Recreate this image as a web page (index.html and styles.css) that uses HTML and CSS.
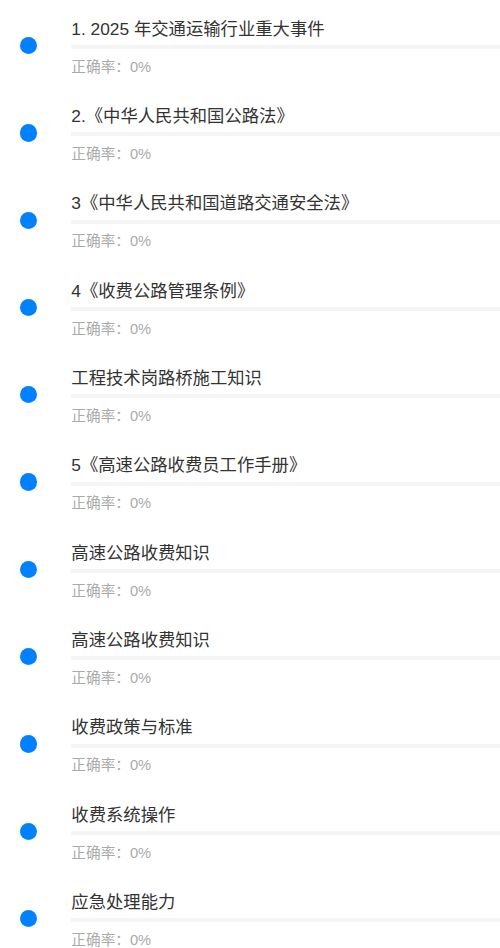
FILE: index.html
```html
<!DOCTYPE html>
<html lang="zh-CN">
<head>
    <meta charset="UTF-8">
    <meta name="viewport" content="width=device-width, initial-scale=1.0">
    <title>题库练习</title>
    <link rel="stylesheet" href="styles.css">
</head>
<body>
    <ul class="bank-list">
        <li class="bank-item">
            <span class="dot"></span>
            <div class="bank-info">
                <p class="bank-title">1. 2025 年交通运输行业重大事件</p>
                <div class="progress"><div class="progress-fill" style="width: 0%"></div></div>
                <p class="bank-rate">正确率：0%</p>
            </div>
        </li>
        <li class="bank-item">
            <span class="dot"></span>
            <div class="bank-info">
                <p class="bank-title">2.《中华人民共和国公路法》</p>
                <div class="progress"><div class="progress-fill" style="width: 0%"></div></div>
                <p class="bank-rate">正确率：0%</p>
            </div>
        </li>
        <li class="bank-item">
            <span class="dot"></span>
            <div class="bank-info">
                <p class="bank-title">3《中华人民共和国道路交通安全法》</p>
                <div class="progress"><div class="progress-fill" style="width: 0%"></div></div>
                <p class="bank-rate">正确率：0%</p>
            </div>
        </li>
        <li class="bank-item">
            <span class="dot"></span>
            <div class="bank-info">
                <p class="bank-title">4《收费公路管理条例》</p>
                <div class="progress"><div class="progress-fill" style="width: 0%"></div></div>
                <p class="bank-rate">正确率：0%</p>
            </div>
        </li>
        <li class="bank-item">
            <span class="dot"></span>
            <div class="bank-info">
                <p class="bank-title">工程技术岗路桥施工知识</p>
                <div class="progress"><div class="progress-fill" style="width: 0%"></div></div>
                <p class="bank-rate">正确率：0%</p>
            </div>
        </li>
        <li class="bank-item">
            <span class="dot"></span>
            <div class="bank-info">
                <p class="bank-title">5《高速公路收费员工作手册》</p>
                <div class="progress"><div class="progress-fill" style="width: 0%"></div></div>
                <p class="bank-rate">正确率：0%</p>
            </div>
        </li>
        <li class="bank-item">
            <span class="dot"></span>
            <div class="bank-info">
                <p class="bank-title">高速公路收费知识</p>
                <div class="progress"><div class="progress-fill" style="width: 0%"></div></div>
                <p class="bank-rate">正确率：0%</p>
            </div>
        </li>
        <li class="bank-item">
            <span class="dot"></span>
            <div class="bank-info">
                <p class="bank-title">高速公路收费知识</p>
                <div class="progress"><div class="progress-fill" style="width: 0%"></div></div>
                <p class="bank-rate">正确率：0%</p>
            </div>
        </li>
        <li class="bank-item">
            <span class="dot"></span>
            <div class="bank-info">
                <p class="bank-title">收费政策与标准</p>
                <div class="progress"><div class="progress-fill" style="width: 0%"></div></div>
                <p class="bank-rate">正确率：0%</p>
            </div>
        </li>
        <li class="bank-item">
            <span class="dot"></span>
            <div class="bank-info">
                <p class="bank-title">收费系统操作</p>
                <div class="progress"><div class="progress-fill" style="width: 0%"></div></div>
                <p class="bank-rate">正确率：0%</p>
            </div>
        </li>
        <li class="bank-item">
            <span class="dot"></span>
            <div class="bank-info">
                <p class="bank-title">应急处理能力</p>
                <div class="progress"><div class="progress-fill" style="width: 0%"></div></div>
                <p class="bank-rate">正确率：0%</p>
            </div>
        </li>
    </ul>
</body>
</html>
```

FILE: styles.css
```css
body {
    margin: 0;
    background-color: #ffffff;
    font-family: "Liberation Sans", "Noto Sans CJK SC", sans-serif;
    overflow: hidden;
}

.bank-list {
    list-style: none;
    margin: 0;
    padding: 0;
}

.bank-item {
    display: flex;
    align-items: flex-start;
    height: 87.33px;
    padding-top: 16.67px;
    box-sizing: border-box;
}

.dot {
    flex: none;
    width: 17.33px;
    height: 17.33px;
    margin: 20.2px 34px 0 20px;
    border-radius: 50%;
    background-color: #0081ff;
}

.bank-info {
    flex: 1;
    min-width: 0;
}

.bank-title {
    margin: 0;
    font-size: 17.33px;
    line-height: 24px;
    color: #333333;
    white-space: nowrap;
}

.progress {
    height: 4px;
    margin-top: 4.5px;
    background-color: #f5f5f5;
}

.progress-fill {
    height: 100%;
    background-color: #0081ff;
}

.bank-rate {
    margin: 7.5px 0 0 0;
    font-size: 14.67px;
    line-height: 20px;
    color: #aaaaaa;
}
```
